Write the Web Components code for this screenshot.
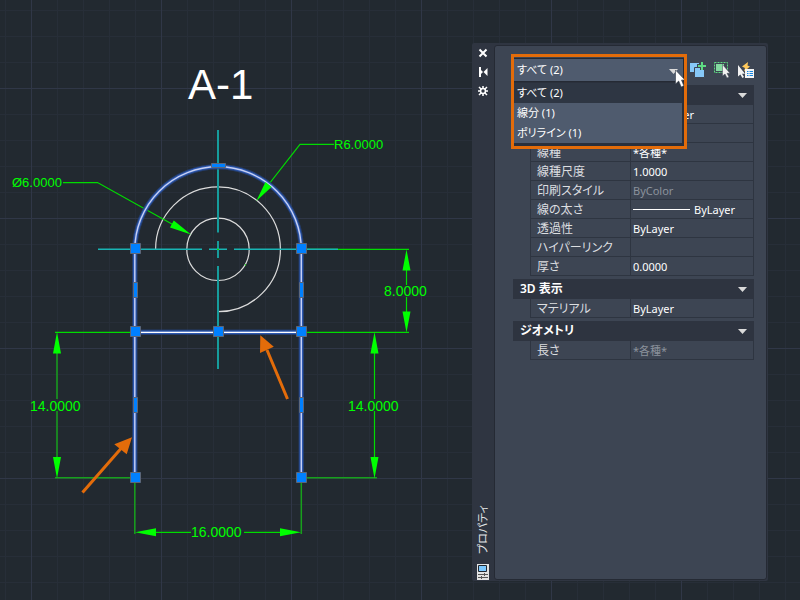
<!DOCTYPE html>
<html lang="ja">
<head>
<meta charset="utf-8">
<meta name="viewport" content="width=device-width, initial-scale=1">
<title>プロパティ</title>
<style>
  html, body { height: 100%; margin: 0; background: #222930; }
  body {
    --ui: "Noto Sans", "Noto Sans CJK JP", sans-serif;
    --body: #3d4553; --dark: #2e3440; --line: #2e3541; --field: #4f5b6e;
    font: 11px/16px var(--ui);
    color: #fff;
    font-feature-settings: "palt";
    overflow: hidden;
  }
</style>
</head>
<body>
<cad-workspace></cad-workspace>

<template id="workspace">
  <style>
    :host { display: block; position: relative; height: 100%; }
    tool-palette { position: absolute; top: 43px; right: 32px; bottom: 19px; width: 296px; }
  </style>
  <cad-drawing></cad-drawing>
  <tool-palette heading="プロパティ">
    <palette-toolbar></palette-toolbar>
    <property-section></property-section>
    <property-section heading="3D 表示"></property-section>
    <property-section heading="ジオメトリ"></property-section>
  </tool-palette>
</template>

<template id="drawing">
  <style>
    :host { display: block; height: 100%; }
    svg { display: block; width: 100%; height: 100%; }
    text { font-family: "Liberation Sans", sans-serif; font-size: 14px; fill: #00ff00; }
    text.leader { font-size: 13px; }
    text.title { font-size: 42px; fill: #fff; }
    .dim { stroke: #00dc00; fill: none; stroke-width: 1.2; }
    .soft { stroke: #17a01c; stroke-width: 1.5; fill: none; }
    .heads { fill: #00ff00; }
    .axis { stroke: #169c9c; fill: none; }
    .part { stroke: #dcdcdc; stroke-width: 1.2; fill: none; }
    .grip { fill: #0080ff; stroke: #5c6678; }
    .note { stroke: #e36c0a; stroke-width: 3; }
    .notehead { fill: #e36c0a; }
  </style>
  <svg role="img" aria-label="A-1">
    <defs>
      <pattern id="minor" x="5" y="10" width="26" height="26" patternUnits="userSpaceOnUse">
        <path d="M.5 0V26M0 .5H26" stroke="#272e38" fill="none"/>
      </pattern>
      <pattern id="major" x="31" y="88" width="130" height="130" patternUnits="userSpaceOnUse">
        <path d="M.5 0V130M0 .5H130" stroke="#303747" fill="none"/>
      </pattern>
    </defs>
    <rect width="100%" height="100%" fill="#222930"/>
    <rect width="100%" height="100%" fill="url(#minor)"/>
    <rect width="100%" height="100%" fill="url(#major)"/>

    <text class="title" x="188" y="99">A-1</text>

    <g class="part">
      <circle cx="218" cy="249.3" r="31.2"/>
      <path d="M155.6 249.3A62.4 62.4 0 1 1 218 311.7"/>
    </g>
    <path class="dim" d="M307 249.3H409M307 332.3H409M55 332.3H130M63 182.6H97.5L180 228.5M334 144.3H300L262 193M374.5 340V399M374.5 411V470M406.5 260V285M406.5 297V322M145 532.3H191M244 532.3H290"/>
    <path class="soft" d="M57 340V399M57 411V470M55 477.8H130M307 477.8H377M134.8 483V534M301.3 483V534"/>
    <path class="axis" stroke-width="2" d="M218 130V232.5M218 241V258M218 266V369"/>
    <path class="axis" stroke-width="1.4" style="stroke:#18b4b4" d="M98 249.3H202M209 249.3H227M234 249.3H338"/>
    <path class="dim" d="M217 249.3H219M244.8 264.8H246"/>

    <g fill="none">
      <path d="M134.8 477V250A83.25 83.25 0 0 1 301.3 250V477M134.8 332.3H301.3" stroke="#24437f" stroke-width="5.5" opacity=".75"/>
      <path d="M134.8 477V250A83.25 83.25 0 0 1 301.3 250V477M134.8 332.3H301.3" stroke="#2d58b0" stroke-width="3.5"/>
      <path d="M134.8 477V250A83.25 83.25 0 0 1 301.3 250V477" stroke="#c6d0f4" stroke-width="1.4"/>
      <path d="M134.8 332.3H301.3" stroke="#fff" stroke-width="1.2"/>
    </g>

    <path class="heads" d="M57 332l4 21.500h-8zM57 478.500l4-21.500h-8zM374.500 332l4 21.500h-8zM374.500 478.500l4-21.500h-8zM406.500 249.500l4 21h-8zM406.500 332.500l4-21h-8zM135 532.300l21-4v8zM301 532.300l-21-4v8zM191 234.500L173.800 220.500 170 227.500zM256.300 201L265.500 182 271.500 187z"/>

    <g class="grip">
      <path d="M130.500 243.500h10v10h-10zM296.500 243.500h10v10h-10zM130.500 326.500h10v10h-10zM213.500 326.500h10v10h-10zM296.500 326.500h10v10h-10zM130.500 472.500h10v10h-10zM296.500 472.500h10v10h-10z"/>
      <path d="M133.500 282.500h4v15h-4zM299.500 282.500h4v15h-4zM133.500 397.500h4v15h-4zM299.500 397.500h4v15h-4zM211.500 163.500h14v4h-14z"/>
    </g>

    <text class="leader" x="12" y="187">Ø6.0000</text>
    <text class="leader" x="334" y="149">R6.0000</text>
    <text x="384" y="296">8.0000</text>
    <text x="30" y="411">14.0000</text>
    <text x="348" y="411">14.0000</text>
    <text x="191" y="537">16.0000</text>

    <path class="note" d="M287.500 399L267 350M82.500 492.500L121 448.500"/>
    <path class="notehead" d="M260.300 335.300L273.800 346.800 260 353zM132 437.300L114.300 444.300 126.700 454.300z"/>
  </svg>
</template>

<template id="palette">
  <style>
    :host { display: flex; background: #2f3541; border-radius: 2px; }
    aside { display: flex; flex-direction: column; align-items: center; width: 22px; padding-top: 5px; box-sizing: border-box; }
    .controls { display: grid; gap: 9px; }
    button { all: unset; display: block; width: 10px; height: 10px; }
    svg { display: block; }
    h1 { margin: auto 0 10px; font: 11px/16px var(--ui); font-feature-settings: "palt"; color: #e4e6e8; writing-mode: vertical-rl; text-orientation: sideways; transform: rotate(180deg); }
    main { flex: 1; margin: 2px 1px 1px 0; padding: 12px 12px 0 18px; background: var(--body); border: 1px solid #252a34; border-radius: 3px;
      display: flex; flex-direction: column; gap: 3px; box-sizing: border-box; }
  </style>
  <aside>
    <div class="controls">
      <button type="button" aria-label="閉じる"><svg width="10" height="10"><path d="M1.500 1.500L8.500 8.500M8.500 1.500L1.500 8.500" stroke="#fff" stroke-width="2"/></svg></button>
      <button type="button" aria-label="自動的に隠す"><svg width="10" height="10"><path d="M1 0h2v10H1zM3 3l2 2-2 2zM9.500 1v8L5.500 5z" fill="#fff"/></svg></button>
      <button type="button" aria-label="設定"><svg width="10" height="10"><path d="M5 0V10M0 5H10M1 1L9 9M9 1L1 9" stroke="#fff" stroke-width="1.500"/><circle cx="5" cy="5" r="3.200" fill="#fff"/><circle cx="5" cy="5" r="1.700" fill="#2f3541"/></svg></button>
    </div>
    <h1></h1>
    <svg width="12" height="17"><path fill="#e2e2e2" d="M0 0h12v16H0z"/><path fill="#7cc8ff" stroke="#20262f" d="M1.500 1.500h8v6h-8z"/><path stroke="#555" fill="none" d="M1 10.500h10M1 13.500h10M7.500 9v3M4.500 12v3"/></svg>
  </aside>
  <main><slot></slot></main>
</template>

<template id="toolbar">
  <style>
    :host { display: flex; align-items: center; gap: 6px; height: 24px; margin-left: 1px; }
    selection-combo { flex: 1; }
    .tools { display: flex; gap: 8px; }
    button { all: unset; display: block; width: 16px; height: 16px; }
    svg { display: block; overflow: visible; }
  </style>
  <selection-combo></selection-combo>
  <div class="tools">
    <button type="button" aria-label="PICKADD 切り替え"><svg width="16" height="16"><path fill="#86c8f8" d="M0 1h9v9H0z"/><path fill="#86c8f8" stroke="#3d4553" d="M4.500 5.500h10v10h-10z"/><path d="M12 0V8M7 4H16" stroke="#3d4553" stroke-width="4"/><path d="M12 0V8M8 4H16" stroke="#5edb83" stroke-width="2"/></svg></button>
    <button type="button" aria-label="オブジェクトを選択"><svg width="16" height="16"><path d="M.5 .5h13v10h-13z" fill="none" stroke="#5edb83" stroke-dasharray="2 1"/><path fill="#83dba0" d="M2 2h8v7H2z"/><path d="M8.500 2.500V14l2.500-2 2 4 2-1-2-3.700h3z" fill="#f2f2f2" stroke="#3d4553" stroke-width=".5"/></svg></button>
    <button type="button" aria-label="クイック選択"><svg width="16" height="16"><path d="M10 0L4 4.500l3 1.500L6 9.500 12 4.500 9.500 3.500z" fill="#ffc95c"/><path d="M0 3v11.500l2.400-2 2 3.500 1.600-1-2-3.200h3z" fill="#f2f2f2"/><path fill="#f4f4f4" d="M7 7h9v9H7z"/><path d="M9 9.500h1.500M9 11.500h1.500M9 13.500h1.500M11.500 9.500H15M11.500 11.500H15M11.500 13.500H15" stroke="#1685e0"/></svg></button>
  </div>
</template>

<template id="combo">
  <style>
    :host { display: block; position: relative; height: 24px; z-index: 2; }
    select { appearance: none; display: block; width: 100%; height: 24px; margin: 0; padding: 0 16px 0 3px; box-sizing: border-box;
      border: 1px solid #252a34; border-width: 1px 1px 1px 0; border-radius: 0; outline: 0; background: var(--field);
      font: 11px/22px var(--ui); font-feature-settings: "palt"; color: #fff; }
    ul { position: absolute; top: 100%; left: 0; right: 0; margin: 0; padding: 0; list-style: none; background: var(--field);
      border: solid #2a303c; border-width: 1px 2px 3px 0; }
    li { height: 20px; line-height: 20px; padding-left: 3px; }
    li[aria-selected="true"] { background: #2e3643; }
    .arrow { position: absolute; right: 6px; top: 11px; }
    .pointer { position: absolute; right: -1px; top: 12px; z-index: 1; }
    .frame { position: absolute; inset: -4px -3px -67px; border: 3px solid #e36c0a; pointer-events: none; z-index: 2; }
  </style>
  <select aria-label="選択"><option>すべて (2)</option><option>線分 (1)</option><option>ポリライン (1)</option></select>
  <svg class="arrow" width="9" height="5"><path d="M0 0h9L4.500 5z" fill="#dadada"/></svg>
  <ul role="listbox" aria-label="選択">
    <li role="option" aria-selected="true">すべて (2)</li>
    <li role="option">線分 (1)</li>
    <li role="option">ポリライン (1)</li>
  </ul>
  <svg class="pointer" width="10" height="17"><path d="M.5 0V14l3.200-3 2.500 6 2.600-1.200L6.500 10H10z" fill="#fff" stroke="#333a46" stroke-width=".6"/></svg>
  <div class="frame"></div>
</template>

<template id="section">
  <style>
    :host { display: block; }
    button { all: unset; display: flex; align-items: center; justify-content: space-between; box-sizing: border-box; width: 100%;
      height: 20px; padding: 0 7px; background: var(--dark); font: 600 12px/20px var(--ui); font-feature-settings: "palt"; color: #fff; }
    table { width: calc(100% - 17px); margin-left: 17px; border-spacing: 0; table-layout: fixed; border-left: 1px solid var(--line); }
    th, td { height: 17px; padding: 1px 0 0 6px; border: solid var(--line); border-width: 0 1px 1px 0; text-align: left;
      font: 12px/17px var(--ui); font-feature-settings: "palt"; color: #dcdee0; white-space: nowrap; }
    th { width: 93px; }
    td { padding-left: 2px; font-size: 11px; color: #fff; }
    td.off { color: #8b929c; }
    td span { display: flex; align-items: center; gap: 4px; }
    i { width: 57px; height: 1px; background: #fff; }
    i.swatch { width: 16px; height: 10px; }
  </style>
  <button type="button" aria-expanded="true"><span></span><svg width="9" height="5"><path d="M0 0h9L4.500 5z" fill="#dadada"/></svg></button>
  <table><tbody></tbody></table>
</template>

<script>
  const define = (name, id, setup = () => {}) => customElements.define(name, class extends HTMLElement {
    constructor() {
      super();
      this.attachShadow({ mode: "open" }).append(document.getElementById(id).content.cloneNode(true));
    }
    connectedCallback() { setup(this, this.shadowRoot); }
  });

  const properties = {
    "": [
      ["", "ByLayer", "", "swatch"],
      ["", ""],
      ["線種", "*各種*"],
      ["線種尺度", "1.0000"],
      ["印刷スタイル", "ByColor", "off"],
      ["線の太さ", "ByLayer", "", "weight"],
      ["透過性", "ByLayer"],
      ["ハイパーリンク", ""],
      ["厚さ", "0.0000"]
    ],
    "3D 表示": [["マテリアル", "ByLayer"]],
    "ジオメトリ": [["長さ", "*各種*", "off"]]
  };

  define("cad-drawing", "drawing");
  define("selection-combo", "combo");
  define("palette-toolbar", "toolbar");
  define("property-section", "section", (host, root) => {
    const heading = host.getAttribute("heading") || "";
    root.querySelector("button span").textContent = heading;
    root.querySelector("tbody").innerHTML = properties[heading].map(([name, value, state = "", mark]) =>
      `<tr><th scope="row">${name}</th><td class="${state}">${mark ? `<span><i class="${mark}"></i>${value}</span>` : value}</td></tr>`
    ).join("");
  });
  define("tool-palette", "palette", (host, root) => {
    root.querySelector("h1").textContent = host.getAttribute("heading");
  });
  define("cad-workspace", "workspace");
</script>
</body>
</html>
